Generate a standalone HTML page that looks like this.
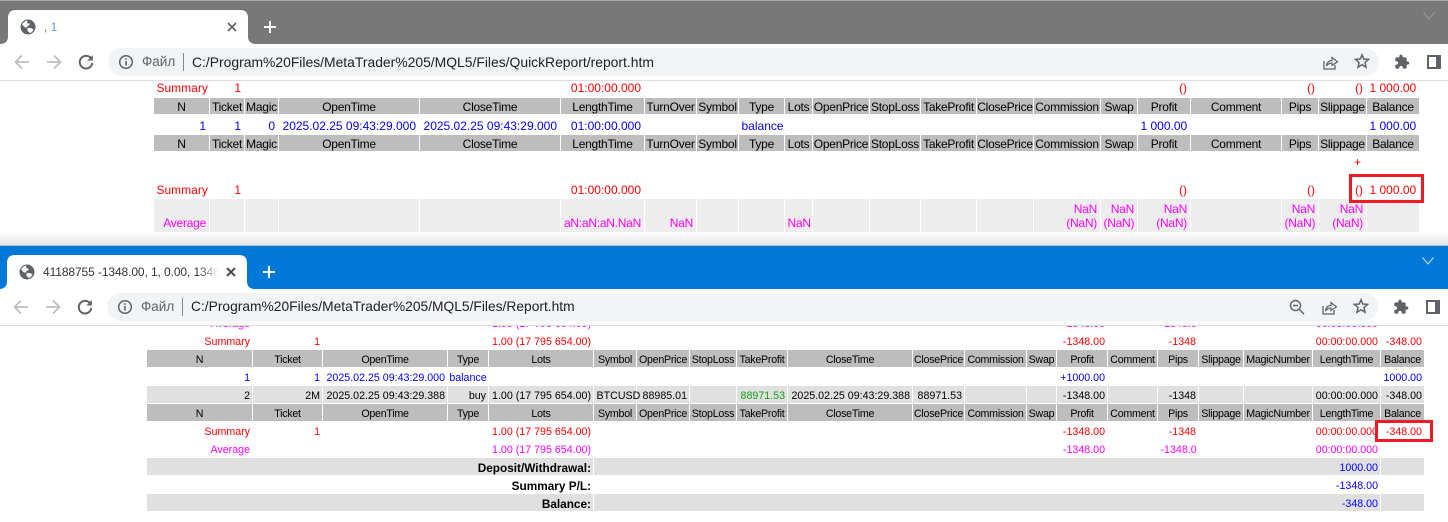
<!DOCTYPE html>
<html><head><meta charset="utf-8"><style>
html,body{margin:0;padding:0;background:#fff;}
body{width:1448px;height:522px;position:relative;overflow:hidden;font-family:"Liberation Sans","DejaVu Sans",sans-serif;}
.abs{position:absolute;}
.bar{position:absolute;left:0;width:1448px;height:44px;}
.tool{position:absolute;left:0;width:1448px;height:36px;background:#fff;border-bottom:1px solid #dadce0;}
.pill{position:absolute;top:4px;height:28px;background:#f1f3f4;border-radius:14px;}
.txt{position:absolute;white-space:nowrap;}
.clip{position:absolute;overflow:hidden;left:0;width:1448px;}
table{position:absolute;border-collapse:separate;border-spacing:0;table-layout:fixed;}
td{padding:0 3px 0 2.5px;text-align:right;white-space:nowrap;border-right:1px solid #fff;color:#000;overflow:visible;box-sizing:border-box;vertical-align:middle;}
#t1 td{font-size:12px;line-height:14px;}
#t2 td{font-size:10.67px;line-height:13px;padding-top:2px;padding-right:2px;}
tr.h td{background:#bdbdbd;text-align:center;padding:0;letter-spacing:-.25px;}
#t1 tr.h td{border-bottom:2px solid #fff;padding-top:2px;padding-right:0;}
#t2 tr.h td{border-bottom:1px solid #fff;padding-top:4px;padding-left:0;padding-right:0;}
tr.r td{color:#f00;}
tr.b td{color:#00f;}
tr.m td{color:#f0f;}
tr.g td{background:#e0e0e0;border-bottom:1px solid #fff;}
#t2 tr.g td{padding-top:4px;}
tr.a td{background:#ededed;color:#f0f;vertical-align:bottom;padding-bottom:2px;letter-spacing:-.25px;}
#t1 tr.first td{padding-bottom:2px;}
#t2 td.bd{font-weight:bold;font-size:11.8px;}
.box{position:absolute;border:3px solid #ed1c24;box-sizing:border-box;}
</style></head><body>

<!-- TOP WINDOW -->
<div class="abs" style="left:0;top:0;width:1448px;height:1px;background:#a8a8a8"></div>
<div class="bar" style="top:1px;height:43px;background:#787878"></div>
<svg class="abs" style="left:0;top:10px" width="256" height="34"><path d="M0 34Q8 34 8 26V8Q8 0 16 0H240Q248 0 248 8V26Q248 34 256 34Z" fill="#fff"/></svg>
<svg class="abs" style="left:20px;top:19px" width="16" height="16" viewBox="0 0 16 16"><circle cx="8" cy="8" r="7.5" fill="#5f6368"/><path d="M7 1.5C5 2 3 3.5 2 5.5L5 8.5 7 8.5 7.5 7 9.5 6 9.5 4.5 7.5 4.5ZM9 9L7 9.5 8 12.5 10 14C11.5 13.5 13 12 13.5 10.5L11 9Z" fill="#fff"/></svg>
<div class="txt" style="left:44px;top:20px;font-size:12px;line-height:14px;color:#5f9bc8"><span style="color:#777">,</span> 1</div>
<svg class="abs" style="left:226px;top:21px" width="12" height="12"><path d="M2 2L10 10M10 2L2 10" stroke="#5f6368" stroke-width="1.7"/></svg>
<svg class="abs" style="left:263px;top:20px" width="14" height="14"><path d="M7 1V13M1 7H13" stroke="#fff" stroke-width="2"/></svg>
<svg class="abs" style="left:1422px;top:11px" width="14" height="10"><path d="M1.5 1.5L7 8 12.5 1.5" stroke="#9a9a9a" stroke-width="1" fill="none"/></svg>

<div class="tool" style="top:44px">
  <div class="pill" style="left:108px;width:1271px"></div>
  <svg class="abs" style="left:13px;top:9px" width="18" height="18"><path d="M16 9H2.5M9 2.5L2.5 9 9 15.5" stroke="#bcbfc3" stroke-width="1.8" fill="none"/></svg>
  <svg class="abs" style="left:45px;top:9px" width="18" height="18"><path d="M2 9H15.5M9 2.5L15.5 9 9 15.5" stroke="#bcbfc3" stroke-width="1.8" fill="none"/></svg>
  <svg class="abs" style="left:77px;top:9px" width="18" height="18"><path d="M14.5 6A6.3 6.3 0 1 0 15.3 10" stroke="#5f6368" stroke-width="2" fill="none"/><path d="M15.8 2V7.5H10.3Z" fill="#5f6368"/></svg>
  <svg class="abs" style="left:118px;top:10px" width="16" height="16"><circle cx="8" cy="8" r="6.3" stroke="#5f6368" stroke-width="1.5" fill="none"/><path d="M8 7V11.5M8 4.3V5.9" stroke="#5f6368" stroke-width="1.6"/></svg>
  <div class="txt" style="left:142px;top:10px;font-size:13.5px;line-height:16px;color:#5f6368">Файл</div>
  <div class="abs" style="left:183px;top:9px;width:1px;height:18px;background:#80868b"></div>
  <div class="txt" style="left:192px;top:10px;font-size:13.9px;line-height:16px;color:#202124">C:/Program%20Files/MetaTrader%205/MQL5/Files/QuickReport/report.htm</div>
  <svg class="abs" style="left:1321px;top:9px" width="18" height="18"><path d="M3 8V16H14V12" stroke="#5f6368" stroke-width="1.3" fill="none"/><path d="M5.5 13C6 9.5 8 7.5 11 7.5V4.5L16.5 8.8 11 12.5V10C9 10 7 11 5.5 13Z" stroke="#5f6368" stroke-width="1.2" fill="none"/></svg>
  <svg class="abs" style="left:1354px;top:9px" width="16" height="16"><path d="M8 1.8L9.8 6 14.5 6.4 11 9.5 12 14.2 8 11.7 4 14.2 5 9.5 1.5 6.4 6.2 6Z" stroke="#5f6368" stroke-width="1.5" fill="none"/></svg>
  <svg class="abs" style="left:1394px;top:10px" width="16" height="16" viewBox="0 0 24 24"><path fill="#5f6368" d="M20.5 11H19V7c0-1.1-.9-2-2-2h-4V3.5C13 2.12 11.88 1 10.5 1S8 2.12 8 3.5V5H4c-1.1 0-1.99.9-1.99 2v3.8H3.5c1.49 0 2.7 1.21 2.7 2.7s-1.21 2.7-2.7 2.7H2V20c0 1.1.9 2 2 2h3.8v-1.5c0-1.49 1.21-2.7 2.7-2.7 1.49 0 2.7 1.21 2.7 2.7V22H17c1.1 0 2-.9 2-2v-4h1.5c1.38 0 2.5-1.12 2.5-2.5S21.88 11 20.5 11z"/></svg>
  <svg class="abs" style="left:1427px;top:11px" width="14" height="14"><rect x="1" y="1" width="12" height="12" stroke="#5f6368" stroke-width="2" fill="#fff"/><rect x="9" y="1" width="4" height="12" fill="#5f6368"/></svg>
</div>

<div class="clip" style="top:81px;height:151px">
<table id="t1" style="left:154px;top:-1px;width:1266px">
<colgroup><col style="width:56px"><col style="width:35px"><col style="width:34px"><col style="width:141px"><col style="width:141px"><col style="width:84px"><col style="width:52px"><col style="width:42px"><col style="width:46px"><col style="width:28px"><col style="width:57px"><col style="width:51px"><col style="width:56px"><col style="width:57px"><col style="width:67px"><col style="width:37px"><col style="width:53px"><col style="width:91px"><col style="width:37px"><col style="width:48px"><col style="width:53px"></colgroup>
<tr class="r first" style="height:18px"><td>Summary</td><td>1</td><td></td><td></td><td></td><td>01:00:00.000</td><td></td><td></td><td></td><td></td><td></td><td></td><td></td><td></td><td></td><td></td><td>()</td><td></td><td>()</td><td>()</td><td>1 000.00</td></tr>
<tr class="h" style="height:18px"><td>N</td><td>Ticket</td><td>Magic</td><td>OpenTime</td><td>CloseTime</td><td>LengthTime</td><td>TurnOver</td><td>Symbol</td><td>Type</td><td>Lots</td><td>OpenPrice</td><td>StopLoss</td><td>TakeProfit</td><td>ClosePrice</td><td>Commission</td><td>Swap</td><td>Profit</td><td>Comment</td><td>Pips</td><td>Slippage</td><td>Balance</td></tr>
<tr class="b" style="height:19px"><td>1</td><td>1</td><td>0</td><td>2025.02.25 09:43:29.000</td><td>2025.02.25 09:43:29.000</td><td>01:00:00.000</td><td></td><td></td><td style="text-align:left">balance</td><td></td><td></td><td></td><td></td><td></td><td></td><td></td><td>1 000.00</td><td></td><td></td><td></td><td>1 000.00</td></tr>
<tr class="h" style="height:18px"><td>N</td><td>Ticket</td><td>Magic</td><td>OpenTime</td><td>CloseTime</td><td>LengthTime</td><td>TurnOver</td><td>Symbol</td><td>Type</td><td>Lots</td><td>OpenPrice</td><td>StopLoss</td><td>TakeProfit</td><td>ClosePrice</td><td>Commission</td><td>Swap</td><td>Profit</td><td>Comment</td><td>Pips</td><td>Slippage</td><td>Balance</td></tr>
<tr class="r" style="height:18px"><td colspan="19"></td><td style="padding-right:5px">+</td><td></td></tr>
<tr style="height:9px"><td colspan="21" style="font-size:1px;line-height:1px"></td></tr>
<tr class="r" style="height:19px"><td>Summary</td><td>1</td><td></td><td></td><td></td><td>01:00:00.000</td><td></td><td></td><td></td><td></td><td></td><td></td><td></td><td></td><td></td><td></td><td>()</td><td></td><td>()</td><td>()</td><td>1 000.00</td></tr>
<tr class="a" style="height:33px"><td>Average</td><td></td><td></td><td></td><td></td><td>aN:aN:aN.NaN</td><td>NaN</td><td></td><td></td><td>NaN</td><td></td><td></td><td></td><td></td><td>NaN<br>(NaN)</td><td>NaN<br>(NaN)</td><td>NaN<br>(NaN)</td><td></td><td>NaN<br>(NaN)</td><td>NaN<br>(NaN)</td><td></td></tr>
</table>
</div>
<div class="box" style="left:1349px;top:174px;width:75px;height:29px"></div>
<div class="abs" style="left:0;top:232px;width:1448px;height:13px;background:linear-gradient(#fff,#e6e6e6)"></div>

<!-- BOTTOM WINDOW -->
<div class="abs" style="left:0;top:245px;width:1448px;height:1px;background:#b4c4d4"></div>
<div class="bar" style="top:246px;height:43px;background:#0078d7"></div>
<svg class="abs" style="left:-1px;top:255px" width="256" height="34"><path d="M0 34Q8 34 8 26V8Q8 0 16 0H240Q248 0 248 8V26Q248 34 256 34Z" fill="#fff"/></svg>
<svg class="abs" style="left:19px;top:264px" width="16" height="16" viewBox="0 0 16 16"><circle cx="8" cy="8" r="7.5" fill="#5f6368"/><path d="M7 1.5C5 2 3 3.5 2 5.5L5 8.5 7 8.5 7.5 7 9.5 6 9.5 4.5 7.5 4.5ZM9 9L7 9.5 8 12.5 10 14C11.5 13.5 13 12 13.5 10.5L11 9Z" fill="#fff"/></svg>
<div class="txt" style="left:43px;top:265px;width:176px;overflow:hidden;font-size:12px;letter-spacing:-.1px;line-height:14px;color:#333">41188755 -1348.00, 1, 0.00, 1348.00</div>
<div class="abs" style="left:199px;top:264px;width:20px;height:16px;background:linear-gradient(90deg,rgba(255,255,255,0),#fff)"></div>
<svg class="abs" style="left:225px;top:266px" width="12" height="12"><path d="M2 2L10 10M10 2L2 10" stroke="#4a4d51" stroke-width="2"/></svg>
<svg class="abs" style="left:262px;top:265px" width="14" height="14"><path d="M7 1V13M1 7H13" stroke="#fff" stroke-width="2"/></svg>
<svg class="abs" style="left:1421px;top:256px" width="14" height="10"><path d="M1.5 1.5L7 8 12.5 1.5" stroke="#cfe4f7" stroke-width="1" fill="none"/></svg>

<div class="tool" style="top:289px">
  <div class="pill" style="left:107px;width:1271px"></div>
  <svg class="abs" style="left:12px;top:9px" width="18" height="18"><path d="M16 9H2.5M9 2.5L2.5 9 9 15.5" stroke="#bcbfc3" stroke-width="1.8" fill="none"/></svg>
  <svg class="abs" style="left:44px;top:9px" width="18" height="18"><path d="M2 9H15.5M9 2.5L15.5 9 9 15.5" stroke="#bcbfc3" stroke-width="1.8" fill="none"/></svg>
  <svg class="abs" style="left:76px;top:9px" width="18" height="18"><path d="M14.5 6A6.3 6.3 0 1 0 15.3 10" stroke="#5f6368" stroke-width="2" fill="none"/><path d="M15.8 2V7.5H10.3Z" fill="#5f6368"/></svg>
  <svg class="abs" style="left:117px;top:10px" width="16" height="16"><circle cx="8" cy="8" r="6.3" stroke="#5f6368" stroke-width="1.5" fill="none"/><path d="M8 7V11.5M8 4.3V5.9" stroke="#5f6368" stroke-width="1.6"/></svg>
  <div class="txt" style="left:141px;top:10px;font-size:13.5px;line-height:16px;color:#5f6368">Файл</div>
  <div class="abs" style="left:182px;top:9px;width:1px;height:18px;background:#80868b"></div>
  <div class="txt" style="left:191px;top:10px;font-size:13.8px;line-height:16px;color:#202124">C:/Program%20Files/MetaTrader%205/MQL5/Files/Report.htm</div>
  <svg class="abs" style="left:1289px;top:10px" width="16" height="16"><circle cx="6.5" cy="6.5" r="5" stroke="#5f6368" stroke-width="1.4" fill="none"/><path d="M4 6.5H9M10.2 10.2L15 15" stroke="#5f6368" stroke-width="1.4"/></svg>
  <svg class="abs" style="left:1320px;top:9px" width="18" height="18"><path d="M3 8V16H14V12" stroke="#5f6368" stroke-width="1.3" fill="none"/><path d="M5.5 13C6 9.5 8 7.5 11 7.5V4.5L16.5 8.8 11 12.5V10C9 10 7 11 5.5 13Z" stroke="#5f6368" stroke-width="1.2" fill="none"/></svg>
  <svg class="abs" style="left:1353px;top:9px" width="16" height="16"><path d="M8 1.8L9.8 6 14.5 6.4 11 9.5 12 14.2 8 11.7 4 14.2 5 9.5 1.5 6.4 6.2 6Z" stroke="#5f6368" stroke-width="1.5" fill="none"/></svg>
  <svg class="abs" style="left:1393px;top:10px" width="16" height="16" viewBox="0 0 24 24"><path fill="#5f6368" d="M20.5 11H19V7c0-1.1-.9-2-2-2h-4V3.5C13 2.12 11.88 1 10.5 1S8 2.12 8 3.5V5H4c-1.1 0-1.99.9-1.99 2v3.8H3.5c1.49 0 2.7 1.21 2.7 2.7s-1.21 2.7-2.7 2.7H2V20c0 1.1.9 2 2 2h3.8v-1.5c0-1.49 1.21-2.7 2.7-2.7 1.49 0 2.7 1.21 2.7 2.7V22H17c1.1 0 2-.9 2-2v-4h1.5c1.38 0 2.5-1.12 2.5-2.5S21.88 11 20.5 11z"/></svg>
  <svg class="abs" style="left:1426px;top:11px" width="14" height="14"><rect x="1" y="1" width="12" height="12" stroke="#5f6368" stroke-width="2" fill="#fff"/><rect x="9" y="1" width="4" height="12" fill="#5f6368"/></svg>
</div>

<div class="clip" style="top:326px;height:196px">
<table id="t2" style="left:147px;top:-12px;width:1278px">
<colgroup><col style="width:106px"><col style="width:70px"><col style="width:125px"><col style="width:41px"><col style="width:105px"><col style="width:43px"><col style="width:53px"><col style="width:47px"><col style="width:51px"><col style="width:125px"><col style="width:52px"><col style="width:62px"><col style="width:30px"><col style="width:51px"><col style="width:50px"><col style="width:41px"><col style="width:45px"><col style="width:69px"><col style="width:68px"><col style="width:44px"></colgroup>
<tr class="m" style="height:18px"><td>Average</td><td></td><td></td><td></td><td>1.00 (17 795 654.00)</td><td></td><td></td><td></td><td></td><td></td><td></td><td></td><td></td><td>-1348.00</td><td></td><td>-1348.0</td><td></td><td></td><td>00:00:00.000</td><td></td></tr>
<tr class="r" style="height:18px"><td>Summary</td><td>1</td><td></td><td></td><td>1.00 (17 795 654.00)</td><td></td><td></td><td></td><td></td><td></td><td></td><td></td><td></td><td>-1348.00</td><td></td><td>-1348</td><td></td><td></td><td>00:00:00.000</td><td>-348.00</td></tr>
<tr class="h" style="height:18px"><td>N</td><td>Ticket</td><td>OpenTime</td><td>Type</td><td>Lots</td><td>Symbol</td><td>OpenPrice</td><td>StopLoss</td><td>TakeProfit</td><td>CloseTime</td><td>ClosePrice</td><td>Commission</td><td>Swap</td><td>Profit</td><td>Comment</td><td>Pips</td><td>Slippage</td><td>MagicNumber</td><td>LengthTime</td><td>Balance</td></tr>
<tr class="b" style="height:18px"><td>1</td><td>1</td><td>2025.02.25 09:43:29.000</td><td style="text-align:center;padding-left:0;padding-right:0">balance</td><td></td><td></td><td></td><td></td><td></td><td></td><td></td><td></td><td></td><td>+1000.00</td><td></td><td></td><td></td><td></td><td></td><td>1000.00</td></tr>
<tr class="g" style="height:18px"><td>2</td><td>2M</td><td>2025.02.25 09:43:29.388</td><td>buy</td><td>1.00 (17 795 654.00)</td><td style="padding-right:1px">BTCUSD</td><td>88985.01</td><td></td><td style="color:#14a014">88971.53</td><td>2025.02.25 09:43:29.388</td><td>88971.53</td><td></td><td></td><td>-1348.00</td><td></td><td>-1348</td><td></td><td></td><td>00:00:00.000</td><td>-348.00</td></tr>
<tr class="h" style="height:18px"><td>N</td><td>Ticket</td><td>OpenTime</td><td>Type</td><td>Lots</td><td>Symbol</td><td>OpenPrice</td><td>StopLoss</td><td>TakeProfit</td><td>CloseTime</td><td>ClosePrice</td><td>Commission</td><td>Swap</td><td>Profit</td><td>Comment</td><td>Pips</td><td>Slippage</td><td>MagicNumber</td><td>LengthTime</td><td>Balance</td></tr>
<tr class="r" style="height:18px"><td>Summary</td><td>1</td><td></td><td></td><td>1.00 (17 795 654.00)</td><td></td><td></td><td></td><td></td><td></td><td></td><td></td><td></td><td>-1348.00</td><td></td><td>-1348</td><td></td><td></td><td>00:00:00.000</td><td>-348.00</td></tr>
<tr class="m" style="height:18px"><td>Average</td><td></td><td></td><td></td><td>1.00 (17 795 654.00)</td><td></td><td></td><td></td><td></td><td></td><td></td><td></td><td></td><td>-1348.00</td><td></td><td>-1348.0</td><td></td><td></td><td>00:00:00.000</td><td></td></tr>
<tr class="g" style="height:18px"><td colspan="5" class="bd">Deposit/Withdrawal:</td><td colspan="14" style="color:#00f">1000.00</td><td></td></tr>
<tr style="height:18px"><td colspan="5" class="bd">Summary P/L:</td><td colspan="14" style="color:#00f">-1348.00</td><td></td></tr>
<tr class="g" style="height:18px"><td colspan="5" class="bd">Balance:</td><td colspan="14" style="color:#00f">-348.00</td><td></td></tr>
</table>
</div>
<div class="box" style="left:1375px;top:420px;width:58px;height:22px"></div>
</body></html>
